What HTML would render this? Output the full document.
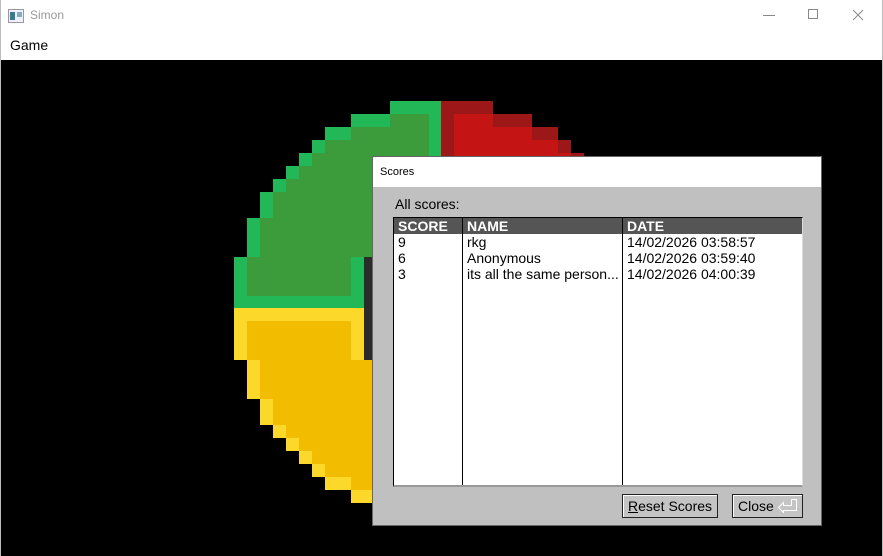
<!DOCTYPE html>
<html><head><style>
*{margin:0;padding:0;box-sizing:border-box}
body{width:883px;height:556px;overflow:hidden;background:#fff;font-family:"Liberation Sans",sans-serif;position:relative}
.a{position:absolute}
</style></head><body>
<div class="a" style="left:0;top:0;width:883px;height:556px;border:1px solid #bbb;border-top:none"></div>
<svg class="a" style="left:8px;top:9px" width="16" height="14"><rect x="0.5" y="0.5" width="15" height="13" fill="#eef" stroke="#999"/><rect x="2" y="3" width="5" height="8" fill="#3a7a8a"/><rect x="9" y="3" width="5" height="5" fill="#8ab"/></svg>
<div class="a" style="left:30px;top:8px;font-size:12px;color:#999">Simon</div>
<div class="a" style="left:763px;top:15px;width:12px;height:1px;background:#888"></div>
<div class="a" style="left:808px;top:9px;width:10px;height:10px;border:1px solid #888"></div>
<svg class="a" style="left:852px;top:9px" width="12" height="12"><path d="M1 1L11 11M11 1L1 11" stroke="#888" stroke-width="1"/></svg>
<div class="a" style="left:10px;top:37px;font-size:14px;color:#000">Game</div>
<div class="a" style="left:1px;top:60px;width:881px;height:496px;background:#000"></div>
<svg class="a" style="left:0;top:0" width="883" height="556">
<polygon fill="#22b858" points="441,101 441,308 234,308 234,257 247,257 247,218 260,218 260,192 273,192 273,179 286,179 286,166 299,166 299,153 312,153 312,140 325,140 325,127 351,127 351,114 390,114 390,101"/>
<polygon fill="#3c9c3c" points="429,114 429,257 351,257 351,296 247,296 247,257 260,257 260,218 273,218 273,192 286,192 286,179 299,179 299,166 312,166 312,153 325,153 325,140 351,140 351,127 390,127 390,114"/>
<polygon fill="#9c1818" points="441,101 493,101 493,114 532,114 532,127 558,127 558,140 571,140 571,153 584,153 584,170 441,170"/>
<polygon fill="#c41414" points="454,114 493,114 493,127 532,127 532,140 558,140 558,153 571,153 571,170 454,170"/>
<polygon fill="#fcd82a" points="234,308 372,308 372,503 351,503 351,490 325,490 325,477 312,477 312,464 299,464 299,451 286,451 286,438 273,438 273,425 260,425 260,399 247,399 247,360 234,360"/>
<polygon fill="#f2bc00" points="247,321 351,321 351,360 372,360 372,490 351,490 351,477 325,477 325,464 312,464 312,451 299,451 299,438 286,438 286,425 273,425 273,399 260,399 260,360 247,360"/>
<rect x="364" y="257" width="8" height="103" fill="#2b2b2b"/>
</svg>
<div class="a" style="left:372px;top:156px;width:450px;height:370px;background:#c0c0c0;border:1px solid #666">
 <div class="a" style="left:0;top:0;width:448px;height:30px;background:#fff;font-size:11px;padding:9px 0 0 7px">Scores</div>
 <div class="a" style="left:22px;top:39px;font-size:14px;color:#000">All scores:</div>
 <div class="a" style="left:20px;top:60px;width:410px;height:270px;background:#fff;border:1px solid #000;border-right-color:#ddd;border-bottom:2px solid #999;overflow:hidden;font-size:14px;line-height:16px">
  <div class="a" style="left:0;top:0;width:410px;height:16px;background:#555"></div>
  <div class="a" style="left:68px;top:0;width:1px;height:270px;background:#000"></div>
  <div class="a" style="left:228px;top:0;width:1px;height:270px;background:#000"></div>
  <div class="a" style="left:4px;top:0;color:#fff;font-weight:bold">SCORE<br><span style="color:#000;font-weight:normal">9<br>6<br>3</span></div>
  <div class="a" style="left:73px;top:0;color:#fff;font-weight:bold">NAME<br><span style="color:#000;font-weight:normal">rkg<br>Anonymous<br>its all the same person...</span></div>
  <div class="a" style="left:233px;top:0;color:#fff;font-weight:bold">DATE<br><span style="color:#000;font-weight:normal">14/02/2026 03:58:57<br>14/02/2026 03:59:40<br>14/02/2026 04:00:39</span></div>
 </div>
 <div class="a" style="left:249px;top:337px;width:96px;height:24px;border:1px solid #222;background:#c4c4c4;box-shadow:inset 1px 1px #fff;font-size:14px;text-align:center;line-height:22px"><u>R</u>eset Scores</div>
 <div class="a" style="left:359px;top:337px;width:71px;height:24px;border:1px solid #222;background:#c4c4c4;box-shadow:inset 1px 1px #fff;font-size:14px;line-height:22px;padding-left:5px">Close</div>
 <svg class="a" style="left:405px;top:342px" width="20" height="14"><path d="M0.5 9.5L5.5 4.5V7.5H13.5V1.5H18.5V12.5H5.5V14.5Z" transform="translate(0,-1)" fill="none" stroke="#fff" stroke-width="1"/></svg>
</div>
</body></html>
